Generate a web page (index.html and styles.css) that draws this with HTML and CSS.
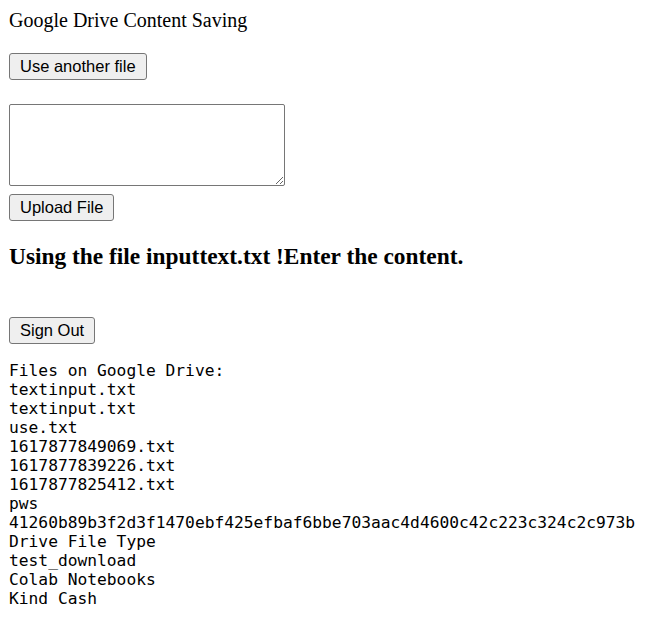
FILE: index.html
```html
<!DOCTYPE html>
<html>
<head>
<meta charset="utf-8">
<link rel="stylesheet" href="styles.css">
</head>
<body>
<div class="title">Google Drive Content Saving</div>
<div class="row first"><button class="btn">Use another file</button></div>
<div class="row area"><textarea class="content" rows="4" cols="30"></textarea></div>
<div class="row upload"><button class="btn">Upload File</button></div>
<h3 class="heading">Using the file inputtext.txt !Enter the content.</h3>
<div class="row signout"><button class="btn">Sign Out</button></div>
<pre class="files">Files on Google Drive:
textinput.txt
textinput.txt
use.txt
1617877849069.txt
1617877839226.txt
1617877825412.txt
pws
41260b89b3f2d3f1470ebf425efbaf6bbe703aac4d4600c42c223c324c2c973b
Drive File Type
test_download
Colab Notebooks
Kind Cash</pre>
</body>
</html>
```

FILE: styles.css
```css
body {
  margin: 8px 8px 8px 9px;
  font-family: "Liberation Serif", serif;
  font-size: 16px;
  color: #000;
  background: #fff;
}
.title {
  font-size: 20px;
  line-height: 25px;
}
.row {
  display: flex;
}
.first {
  margin-top: 20px;
}
.area {
  margin-top: 24px;
}
.upload {
  margin-top: 8px;
}
.btn {
  font-family: "Liberation Sans", Arial, sans-serif;
  font-size: 16.5px;
  height: 27px;
  padding: 0 10px;
  background: #efefef;
  border: 1px solid #767676;
  border-radius: 3px;
  color: #000;
}
.content {
  width: 276px;
  height: 82px;
  box-sizing: border-box;
  border: 1px solid #767676;
  border-radius: 2px;
  padding: 2px;
  margin: 0;
  font-family: "Liberation Mono", monospace;
  font-size: 13px;
}
.heading {
  font-size: 23.4px;
  margin: 22px 0 0;
  line-height: 27px;
}
.signout {
  margin-top: 47px;
}
.files {
  font-family: "DejaVu Sans Mono", monospace;
  font-size: 16.25px;
  line-height: 19px;
  margin: 17px 0 0;
}
```
